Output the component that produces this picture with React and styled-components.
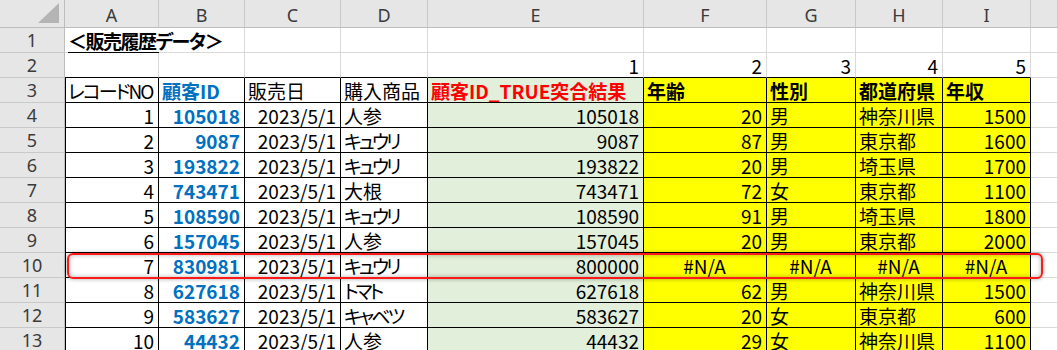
import React from 'react'
import styled, { createGlobalStyle } from 'styled-components'

const GRID = '#d9d9d9'
const INK = '#000000'

const GlobalStyle = createGlobalStyle`
  html, body {
    margin: 0;
    padding: 0;
    background: #ffffff;
  }
  body {
    font-family: "Noto Sans CJK JP", "Noto Sans", sans-serif;
    overflow: hidden;
  }
`

const SheetWrap = styled.div`
  position: relative;
  width: 1058px;
  height: 350px;
  overflow: hidden;
`

const Sheet = styled.div`
  display: grid;
  grid-template-columns: 65px 94px 86px 96px 87px 216px 123px 89px 87px 88px 1fr;
  grid-template-rows: 28px repeat(13, 25px);
  font-size: 19px;
  color: #000;
  font-feature-settings: "palt" 1;
`

const HeadBase = styled.div`
  display: flex;
  align-items: center;
  justify-content: center;
  background: #e6e6e6;
  color: #3b3b3b;
  font-family: "Noto Sans", "Noto Sans CJK JP", sans-serif;
  font-size: 18px;
  box-sizing: border-box;
`

const Corner = styled(HeadBase)`
  justify-content: flex-end;
  align-items: flex-end;
  padding: 0 4px 4px 0;
  border-right: 1px solid #bdbdbd;
  border-bottom: 1px solid #bdbdbd;
`

const ColHead = styled(HeadBase)`
  border-right: 1px solid #c9c9c9;
  border-bottom: 1px solid #bdbdbd;
  padding-top: 2px;
`

const RowHead = styled(HeadBase)`
  border-right: 1px solid #bdbdbd;
  border-bottom: 1px solid #c9c9c9;
`

const Cell = styled.div`
  display: flex;
  align-items: center;
  justify-content: ${p => (p.$align === 'right' ? 'flex-end' : p.$align === 'center' ? 'center' : 'flex-start')};
  box-sizing: border-box;
  padding: 1px 4px 0 3px;
  white-space: nowrap;
  overflow: visible;
  letter-spacing: ${p => p.$squeeze || 0}px;
  border-right: 1px solid ${p => p.$r || GRID};
  border-bottom: 1px solid ${p => p.$b || GRID};
  background: ${p => p.$bg || 'transparent'};
  color: ${p => p.$color || '#000'};
  font-weight: ${p => (p.$bold ? 700 : 400)};
  box-shadow: ${p => (p.$edge ? 'inset 1px 0 0 #000' : 'none')};
`

const Title = styled.span`
  font-weight: 700;
  letter-spacing: -1.5px;
  text-decoration: underline;
  text-underline-offset: 3px;
  text-decoration-thickness: 1px;
  padding-right: 3px;
`

const Highlight = styled.div`
  position: absolute;
  left: 67px;
  top: 253px;
  width: 976px;
  height: 26px;
  box-sizing: border-box;
  border: 2px solid #ff1a1a;
  border-radius: 6px;
  box-shadow: 0 0 4px rgba(0, 0, 0, 0.35), inset 0 0 5px rgba(0, 0, 0, 0.3);
  pointer-events: none;
`

const CornerMark = () => (
  <svg width="22" height="20" viewBox="0 0 22 20">
    <polygon points="21,0 21,20 0,20" fill="#b4b4b4" />
  </svg>
)

const COLS = ['A', 'B', 'C', 'D', 'E', 'F', 'G', 'H', 'I', '']

// items / prefectures
const NINJIN = '\u4eba\u53c2'
const KYURI = '\u30ad\u30e5\u30a6\u30ea'
const DAIKON = '\u5927\u6839'
const TOMATO = '\u30c8\u30de\u30c8'
const CABBAGE = '\u30ad\u30e3\u30d9\u30c4'
const MALE = '\u7537'
const FEMALE = '\u5973'
const KANAGAWA = '\u795e\u5948\u5ddd\u770c'
const TOKYO = '\u6771\u4eac\u90fd'
const SAITAMA = '\u57fc\u7389\u770c'
const NA = '#N/A'

// katakana names come out narrower in the sheet font
const KANA = [KYURI, TOMATO, CABBAGE]

const records = [
  [1, 105018, NINJIN, 105018, 20, MALE, KANAGAWA, 1500],
  [2, 9087, KYURI, 9087, 87, MALE, TOKYO, 1600],
  [3, 193822, KYURI, 193822, 20, MALE, SAITAMA, 1700],
  [4, 743471, DAIKON, 743471, 72, FEMALE, TOKYO, 1100],
  [5, 108590, KYURI, 108590, 91, MALE, SAITAMA, 1800],
  [6, 157045, NINJIN, 157045, 20, MALE, TOKYO, 2000],
  [7, 830981, KYURI, 800000, NA, NA, NA, NA],
  [8, 627618, TOMATO, 627618, 62, MALE, KANAGAWA, 1500],
  [9, 583627, CABBAGE, 583627, 20, FEMALE, TOKYO, 600],
  [10, 44432, NINJIN, 44432, 29, FEMALE, KANAGAWA, 1100],
]

const YELLOW = '#ffff00'
const GREEN = '#e2efda'
const BLUE = '#0070c0'
const RED = '#ff0000'

const isErr = v => v === NA

export default function App() {
  const body = []

  // row 1: title overflowing into B
  body.push(
    <RowHead key="r1">1</RowHead>,
    <Cell key="1a" $r="transparent">
      <Title>{'\uff1c\u8ca9\u58f2\u5c65\u6b74\u30c7\u30fc\u30bf\uff1e'}</Title>
    </Cell>
  )
  for (let c = 1; c < 10; c++) body.push(<Cell key={`1-${c}`} />)

  // row 2: column numbers for the lookup
  body.push(<RowHead key="r2">2</RowHead>)
  for (let c = 0; c < 10; c++) {
    const n = c >= 4 && c <= 8 ? c - 3 : ''
    body.push(
      <Cell key={`2-${c}`} $align="right" $b={c < 9 ? INK : GRID}>
        {n}
      </Cell>
    )
  }

  // row 3: table headers
  const heads = [
    { t: '\u30ec\u30b3\u30fc\u30c9NO', squeeze: -2 },
    { t: '\u9867\u5ba2ID', bold: true, color: BLUE },
    { t: '\u8ca9\u58f2\u65e5' },
    { t: '\u8cfc\u5165\u5546\u54c1' },
    { t: '\u9867\u5ba2ID_TRUE\u7a81\u5408\u7d50\u679c', bold: true, color: RED, bg: GREEN },
    { t: '\u5e74\u9f62', bold: true, bg: YELLOW },
    { t: '\u6027\u5225', bold: true, bg: YELLOW },
    { t: '\u90fd\u9053\u5e9c\u770c', bold: true, bg: YELLOW },
    { t: '\u5e74\u53ce', bold: true, bg: YELLOW },
  ]
  body.push(<RowHead key="r3">3</RowHead>)
  heads.forEach((h, i) =>
    body.push(
      <Cell
        key={`3-${i}`}
        $r={INK}
        $b={INK}
        $edge={i === 0}
        $bold={h.bold}
        $color={h.color}
        $bg={h.bg}
        $squeeze={h.squeeze}
      >
        {h.t}
      </Cell>
    )
  )
  body.push(<Cell key="3-j" />)

  // rows 4-13: records
  records.forEach((rec, idx) => {
    const [no, id, item, match, age, sex, pref, income] = rec
    const row = idx + 4
    const cells = [
      { v: no, align: 'right' },
      { v: id, align: 'right', bold: true, color: BLUE },
      { v: '2023/5/1', align: 'right' },
      { v: item, squeeze: KANA.includes(item) ? -3 : 0 },
      { v: match, align: 'right', bg: GREEN },
      { v: age, align: isErr(age) ? 'center' : 'right', bg: YELLOW },
      { v: sex, align: isErr(sex) ? 'center' : 'left', bg: YELLOW },
      { v: pref, align: isErr(pref) ? 'center' : 'left', bg: YELLOW },
      { v: income, align: isErr(income) ? 'center' : 'right', bg: YELLOW },
    ]
    body.push(<RowHead key={`r${row}`}>{row}</RowHead>)
    cells.forEach((c, i) =>
      body.push(
        <Cell
          key={`${row}-${i}`}
          $r={INK}
          $b={INK}
          $edge={i === 0}
          $align={c.align}
          $bold={c.bold}
          $color={c.color}
          $bg={c.bg}
          $squeeze={c.squeeze}
        >
          {c.v}
        </Cell>
      )
    )
    body.push(<Cell key={`${row}-j`} />)
  })

  return (
    <>
      <GlobalStyle />
      <SheetWrap>
        <Sheet>
          <Corner>
            <CornerMark />
          </Corner>
          {COLS.map((c, i) => (
            <ColHead key={`h${i}`}>{c}</ColHead>
          ))}
          {body}
        </Sheet>
        <Highlight />
      </SheetWrap>
    </>
  )
}
